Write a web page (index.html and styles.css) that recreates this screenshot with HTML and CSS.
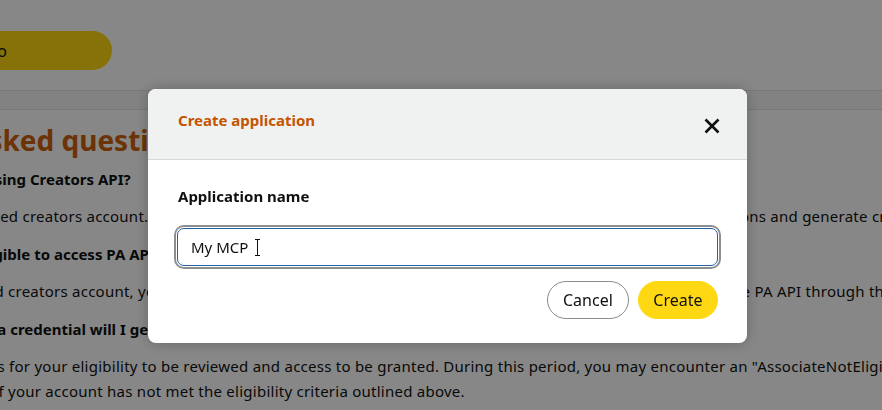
FILE: index.html
```html
<!DOCTYPE html>
<html lang="en">
<head>
<meta charset="utf-8">
<title>Creators API</title>
<link rel="stylesheet" href="styles.css">
</head>
<body>
<div class="page">
  <div class="top">
    <a class="pill">Watch the setup video</a>
  </div>
  <div class="band"></div>
  <section class="faq">
    <h2 class="faq-title">Frequently asked questions</h2>
    <p class="q">Who is eligible to start using Creators API?</p>
    <p class="a">You first need one approved creators account. Once your account is approved, you will be able to register Creators API applications and generate credentials for them.</p>
    <p class="q">Which accounts were eligible to access PA API?</p>
    <p class="a">If you have your approved creators account, you will be able to continue making API queries and accessing all the features of the PA API through the existing credentials.</p>
    <p class="q">How soon after creating a credential will I get access?</p>
    <p class="a last">It may take up to 48 hours for your eligibility to be reviewed and access to be granted. During this period, you may encounter an "AssociateNotEligible" error<br>in the API call responses if your account has not met the eligibility criteria outlined above.</p>
  </section>
</div>

<div class="overlay">
  <div class="modal" role="dialog" aria-labelledby="dlg-title">
    <div class="modal-head">
      <h3 id="dlg-title" class="modal-title">Create application</h3>
      <button class="close" aria-label="Close">
        <svg width="16" height="16" viewBox="0 0 16 16"><path d="M1.5 1.5 L14.5 14.5 M14.5 1.5 L1.5 14.5" stroke="#0f1111" stroke-width="2.6" stroke-linecap="butt"/></svg>
      </button>
    </div>
    <div class="modal-body">
      <label class="field-label" for="appname">Application name</label>
      <div class="input-wrap">
        <input id="appname" class="input" type="text" value="My MCP">
        <span class="ibeam"></span>
      </div>
      <div class="actions">
        <button class="btn btn-cancel">Cancel</button>
        <button class="btn btn-create">Create</button>
      </div>
    </div>
  </div>
</div>
</body>
</html>
```
FILE: styles.css
```css
html, body {
  margin: 0;
  padding: 0;
  background: #ffffff;
  overflow: hidden;
}
body {
  font-family: "Noto Sans", "DejaVu Sans", sans-serif;
  color: #0f1111;
  width: 882px;
  height: 410px;
}
.page {
  margin-left: -187px;
  width: 1600px;
}
.top {
  height: 90px;
  box-sizing: border-box;
  padding-top: 31px;
}
.pill {
  display: flex;
  align-items: center;
  box-sizing: border-box;
  width: 299px;
  height: 39px;
  padding-left: 27px;
  border-radius: 20px;
  background: #ffd814;
  font-size: 16px;
  color: #0f1111;
}
.band {
  height: 18px;
  border-top: 1px solid #e3e5e5;
  border-bottom: 1px solid #e3e5e5;
  background: #f6f6f6;
}
.faq {
  padding-top: 12px;
}
.faq-title {
  margin: 0 0 9px;
  font-size: 28px;
  line-height: 36px;
  font-weight: 700;
  color: #cc620c;
}
.faq p {
  margin: 0;
  white-space: nowrap;
  font-size: 15px;
  line-height: 25px;
}
.faq .q {
  font-weight: 700;
  margin-bottom: 12px;
}
.faq .a {
  margin-bottom: 13px;
  letter-spacing: 0.25px;
}
.overlay {
  position: fixed;
  inset: 0;
  background: rgba(0, 0, 0, 0.47);
  padding: 89px 0 0 148px;
  box-sizing: border-box;
}
.modal {
  width: 599px;
  height: 254px;
  background: #ffffff;
  border-radius: 8px;
  overflow: hidden;
  box-shadow: 0 0 14px rgba(0, 0, 0, 0.25);
}
.modal-head {
  height: 70px;
  background: #f0f2f2;
  border-bottom: 1px solid #d5d9d9;
  display: flex;
  align-items: center;
  justify-content: space-between;
  padding: 0 27px 0 30px;
}
.modal-title {
  margin: 0 0 8px;
  font-size: 15px;
  font-weight: 700;
  color: #c45500;
}
.close {
  border: 0;
  background: none;
  padding: 0;
  width: 16px;
  height: 16px;
  margin-top: 4px;
  display: flex;
}
.modal-body {
  padding: 25px 29px 0 30px;
}
.field-label {
  display: block;
  font-size: 15px;
  font-weight: 700;
  line-height: 22px;
}
.input-wrap {
  position: relative;
  margin: 21px 0 0 -1px;
}
.input {
  display: block;
  box-sizing: border-box;
  width: 541px;
  height: 38px;
  border: 1px solid #2162a1;
  border-radius: 7px;
  box-shadow: 0 0 0 1px #ffffff, 0 0 0 3px #8f8f8f;
  padding: 0 13px;
  font-family: "Noto Sans", "DejaVu Sans", sans-serif;
  font-size: 15px;
  color: #0f1111;
  outline: none;
  background: #fff;
}
.ibeam {
  position: absolute;
  left: 80px;
  top: 11px;
  width: 1px;
  height: 17px;
  background: #111;
}
.ibeam::before, .ibeam::after {
  content: "";
  position: absolute;
  left: -2px;
  width: 5px;
  height: 1px;
  background: #111;
}
.ibeam::before { top: 0; }
.ibeam::after { bottom: 0; }
.actions {
  display: flex;
  justify-content: flex-end;
  gap: 9px;
  margin-top: 15px;
}
.btn {
  height: 38px;
  border-radius: 19px;
  font-family: "Noto Sans", "DejaVu Sans", sans-serif;
  font-size: 16px;
  color: #0f1111;
  padding: 0 15px;
  cursor: pointer;
}
.btn-cancel {
  background: #ffffff;
  border: 1px solid #888c8c;
}
.btn-create {
  background: #ffd814;
  border: 1px solid #ffd814;
  padding: 0 14.5px;
}
```
